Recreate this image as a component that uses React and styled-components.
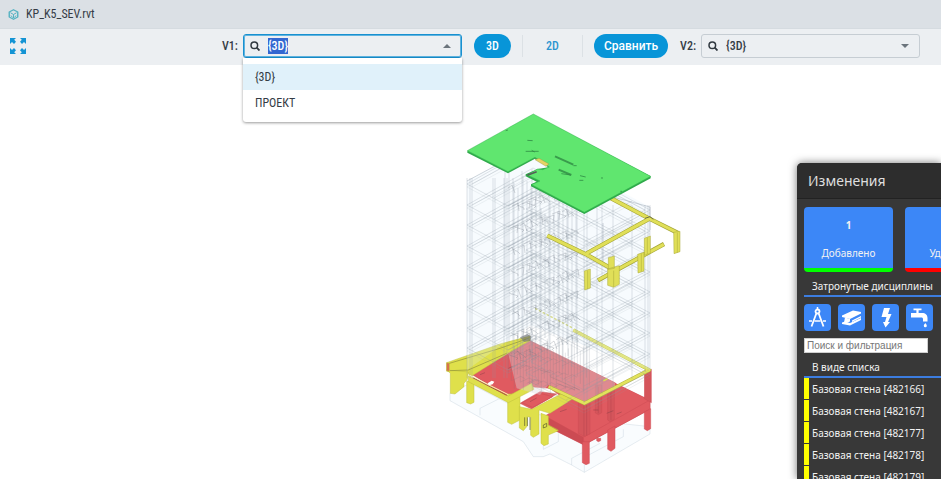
import React, { useEffect, useRef, useState } from 'react';
import styled, { createGlobalStyle, css } from 'styled-components';

const GlobalStyle = createGlobalStyle`
	* {
		box-sizing: border-box;
	}
	body {
		margin: 0;
		background: #fff;
		color: #343c45;
		font-family: "Roboto Condensed", Roboto, sans-serif;
		font-size: 12px;
		line-height: 16px;
	}
	button, input {
		font: inherit;
		color: inherit;
	}
	ul, h2, h3 {
		margin: 0;
		padding: 0;
		font: inherit;
		list-style: none;
	}
`;

const Page = styled.div`
	display: flex;
	flex-direction: column;
	height: 100vh;
	overflow: hidden;
`;

const TitleBar = styled.header`
	display: flex;
	align-items: center;
	gap: 7px;
	height: 29px;
	padding: 0 8px;
	background: #dbe0e5;
	border-bottom: 1px solid #d5dbe0;
`;

const Toolbar = styled.div`
	display: flex;
	align-items: center;
	height: 36px;
	padding: 0 21px 2px 10px;
	background: #eceff2;
`;

const IconButton = styled.button`
	display: flex;
	padding: 0;
	border: none;
	background: none;
	cursor: pointer;
`;

const Controls = styled.div`
	display: flex;
	align-items: center;
	gap: 12px;
	margin-left: auto;
`;

const Field = styled.div`
	display: flex;
	align-items: center;
	gap: 5px;
`;

const Label = styled.label`
	font-weight: 500;
`;

const Combo = styled.div`
	position: relative;
	display: flex;
	align-items: center;
	width: 219px;
	height: 24px;
	padding: 0 10px 0 6px;
	border: 1px solid #c6cdd3;
	border-radius: 3px;
	${ ({ $open }) => $open && css`
		border-color: #1890d0;
		box-shadow: inset 0 0 0 1px #5fb4e0;
	` }
`;

const ComboInput = styled.input`
	flex: 1;
	min-width: 0;
	margin-left: 8px;
	padding: 0;
	border: none;
	background: none;
	font-weight: 500;
	&:focus {
		outline: none;
	}
	&::selection {
		background: #3367d1;
		color: #fff;
	}
`;

const Caret = styled.span`
	border: 4px solid transparent;
	border-top-color: #6b747c;
	border-bottom: none;
	${ ({ $up }) => $up && css`
		border-top: none;
		border-bottom: 4px solid #6b747c;
	` }
`;

const Options = styled.ul`
	position: absolute;
	z-index: 2;
	top: 23px;
	left: -1px;
	right: -1px;
	padding: 6px 0;
	background: #fff;
	border-radius: 0 0 3px 3px;
	box-shadow: 0 1px 3px rgba(0, 0, 0, .4);
`;

const Option = styled.li`
	padding: 5px 12px;
	cursor: pointer;
	background: ${ ({ 'aria-selected': selected }) => (selected ? '#e0f1fa' : 'transparent') };
`;

const Modes = styled.div`
	display: flex;
	align-items: center;
	gap: 11px;
`;

const Divider = styled.span`
	width: 1px;
	height: 22px;
	background: #dce1e5;
`;

const Pill = styled.button`
	height: 24px;
	min-width: 37px;
	padding: 0 10px;
	border: none;
	border-radius: 12px;
	cursor: pointer;
	font-weight: 500;
	color: ${ ({ $active }) => ($active ? '#fff' : '#2b95d0') };
	background: ${ ({ $active }) => ($active ? '#0895d8' : 'none') };
`;

const Compare = styled(Pill)`
	font-family: Roboto, sans-serif;
	font-weight: 500;
`;

const Viewer = styled.main`
	position: relative;
	flex: 1;
	min-height: 0;
`;

const Scene = styled.svg`
	display: block;
	width: 100%;
	height: 100%;
`;

const Panel = styled.aside`
	position: absolute;
	top: 98px;
	right: 0;
	bottom: 0;
	width: 144px;
	overflow: hidden;
	white-space: nowrap;
	font-family: "Noto Sans", sans-serif;
	font-size: 10px;
	color: #f2f2f2;
	background: #383838;
	border-radius: 5px 0 0 0;
	box-shadow: 0 0 9px rgba(0, 0, 0, .55);
`;

const PanelTitle = styled.h2`
	height: 36px;
	padding: 0 11px;
	font-size: 14px;
	line-height: 35px;
	color: #dedede;
	background: #2d2d2d;
	border-bottom: 1px solid #222;
`;

const PanelBody = styled.div`
	padding: 8px 0 0 7px;
`;

const Cards = styled.div`
	display: flex;
	gap: 12px;
`;

const Card = styled.button`
	display: flex;
	flex-direction: column;
	align-items: center;
	flex: 0 0 89px;
	height: 65px;
	padding: 10px 0 7px;
	border: none;
	border-bottom: 4px solid ${ ({ $mark }) => $mark };
	border-radius: 4px;
	background: #3c87f7;
	color: #f2f2f2;
	cursor: pointer;
`;

const CardName = styled.span`
	margin-top: auto;
`;

const Section = styled.h3`
	margin-top: 6px;
	padding: 0 8px 1px;
	border-bottom: 2px solid #3c7de0;
`;

const Disciplines = styled.div`
	display: flex;
	gap: 7px;
	margin-top: 7px;
`;

const Discipline = styled.button`
	display: flex;
	flex: 0 0 27px;
	align-items: center;
	justify-content: center;
	height: 27px;
	padding: 0;
	border: none;
	border-radius: 4px;
	background: #3c87f7;
	cursor: pointer;
`;

const Filter = styled.input`
	display: block;
	width: 124px;
	height: 15px;
	margin-top: 7px;
	padding: 0 2px;
	border: 1px solid #cfcfcf;
	border-radius: 0;
	background: #fff;
	font-family: "Liberation Sans", sans-serif;
	color: #333;
	&::placeholder {
		color: #777;
		opacity: 1;
	}
`;

const Row = styled.li`
	display: flex;
	gap: 3px;
	height: 22px;
	line-height: 22px;
	&::before {
		content: "";
		width: 5px;
		height: 21px;
		background: #ff0;
	}
`;

const CubeIcon = () => (
	<svg width="11" height="11" viewBox="0 0 22 22" fill="none" stroke="#55b2c2" strokeWidth="2.8">
		<path d="M11 1.5 19.5 6v10L11 20.5 2.5 16V6z" strokeLinejoin="round" />
		<path d="M5 7.5l6 3.5 6-3.5M11 11v7M6 13l3 4M16 13l-3 4" strokeWidth="2" />
	</svg>
);

const ExpandIcon = () => (
	<svg width="16" height="16" viewBox="0 0 16 16" fill="#1494d4">
		<path d="M0 0h6L4.200 1.800 6 3.800 4 6 2 4 0 6z" />
		<path d="M16 0h-6l1.800 1.800L10 3.800 12 6l2-2 2 2z" />
		<path d="M0 16h6l-1.800-1.800L6 12.200 4 10l-2 2-2-2z" />
		<path d="M16 16h-6l1.800-1.800L10 12.200 12 10l2 2 2-2z" />
	</svg>
);

const SearchIcon = () => (
	<svg width="10" height="10" viewBox="0 0 10 10" fill="none" stroke="#30383f" strokeWidth="1.5">
		<circle cx="4.300" cy="4.300" r="3.300" />
		<path d="M6.700 6.700 9.500 9.500" strokeWidth="1.800" />
	</svg>
);

const CompassIcon = () => (
	<svg width="19" height="21" viewBox="0 0 19 21" fill="none" stroke="#fff" strokeWidth="1.8">
		<circle cx="9.500" cy="4.500" r="2" />
		<path d="M9.500 0v3" strokeWidth="1.500" />
		<path d="M8.500 6 3.500 19.500M10.500 6l5 13.500" />
		<path d="M1 14h3M6.500 14h6M15 14h3" strokeWidth="1.300" />
	</svg>
);

const BeamIcon = () => (
	<svg width="21" height="18" viewBox="0 0 21 18" fill="#fff">
		<path d="M1 6.500 12 1.500l8 1.500v1.500L9 10 1 8z" />
		<path d="M4 8.500 9 10v2.500L5.500 14 3 13.500z" />
		<path d="M11 11.500 20 7v1.500L11 13z" />
		<path d="M1 13.500 4 12.500l5 1.500 11-5v2L9 16.500l-8-1.500z" />
	</svg>
);

const BoltIcon = () => (
	<svg width="14" height="21" viewBox="0 0 14 21" fill="#fff">
		<path d="M5 1h6L9 7h3.500L9 15h2l-4.500 5.500L4 15h2l1.500-5H2.500z" />
	</svg>
);

const TapIcon = () => (
	<svg width="20" height="21" viewBox="0 0 20 21" fill="#fff">
		<path d="M3.500 1.500h8v1.800H8.600V6H12c3.500 0 5.500 2 5.500 5v3.500h-4.500V12c0-1-.6-1.600-1.600-1.600H1V6h5.400V3.300H3.500z" />
		<path d="M15.300 16c1 1.400 1.500 2 1.500 2.800a1.500 1.500 0 0 1-3 0c0-.8.500-1.400 1.500-2.800z" />
	</svg>
);

const range = (n, from = 0) => Array.from({ length: n }, (_, i) => i + from);

const line = (...points) => 'M' + points.map(([x, y]) => `${ x } ${ y }`).join('L');

// one storey of the tower, y is the height of its left corner
const storey = y => [
	line([467, y], [533, y - 37], [650, y + 26], [584, y + 62], [531, y + 34], [537, y + 30], [526, y + 25], [548, y + 14], [535, y + 7], [508, y + 22], [467, y]),
	line([472, y], [533, y - 33], [645, y + 26], [584, y + 58]),
	line([494, y + 14], [560, y - 22]),
	line([508, y + 22], [575, y - 14]),
	line([566, y + 52], [632, y + 17]),
].join('');

const STOREYS = range(9).map(i => 184 + Math.round(i * 20.500));

const OUTER_COLUMNS = [467, 470, 472, 493, 495, 504, 507, 584, 587, 597, 602, 613, 632, 645, 648, 650];

const columnFoot = x => (x < 580 ? 378 : 403 - Math.round((x - 584) / 2));

// the stair and lift shafts in the middle are much denser
const CORE_COLUMNS = range(25).map(i => 505 + i * 3 + (i * 7) % 3);

const CORE_MARKS = range(110).map(i => {
	const x = 508 + (i * 17) % 66;
	const y = 188 + (i * 37) % 170;
	return line([x, y], [x + 4 + i % 6, y + (i % 2 ? 3 : -3)], [x + 7, y + 5]);
}).join('');

const Wireframe = () => (
	<g fill="none" stroke="#8d98a5">
		<path d="M467 181 533 144 650 207V370L530 325 467 370z" fill="#dfeefa" fillOpacity=".25" stroke="none" />
		<path d={ STOREYS.map(storey).join('') } strokeOpacity=".25" />
		<path d={ STOREYS.map(y => storey(y + 3)).join('') } strokeOpacity=".13" />
		<path d={ OUTER_COLUMNS.map(x => line([x, x < 560 ? 178 : 205], [x, columnFoot(x)])).join('') } strokeOpacity=".28" />
		<path d={ CORE_COLUMNS.map((x, i) => line([x, 168 + (i * 5) % 22 + (x > 540 ? 24 : 0)], [x, 335 + (i * 11) % 35])).join('') } strokeOpacity=".3" />
		<path d={ CORE_MARKS } stroke="#66707c" strokeOpacity=".25" />
		<path d="M467 181 495 166M613 197 650 207V230M603 223V262" strokeOpacity=".4" />
	</g>
);

const Foundation = () => (
	<g fill="#f3f9fd" fillOpacity=".5" stroke="#a8bccb" strokeOpacity=".4" strokeWidth="2" strokeLinejoin="round">
		<path d="M30 190 90 160 260 250 630 290V312L433 427 395 405 330 372 310 380H280L250 335 30 212z" />
		<path d="M120 235V256M120 235 180 205M395 385V405M395 385 480 340M550 298V320L433 382M310 345V358L355 335V310M433 400V427" fill="none" />
	</g>
);

const YELLOW = '#dfe04b';
const YELLOW_DARK = '#bfc03c';
const RED = '#e05a60';
const RED_DARK = '#cc4b53';

const Base = () => (
	<g strokeWidth="1.500" strokeLinejoin="round">
		<Foundation />

		<g fill={ RED } stroke={ RED_DARK }>
			<path d="M97 134 270 32 630 210V238L433 344 315 285V258L385 215 330 175 270 170 205 200z" />
			<path d="M240 220 300 185 350 192 275 237z" />
			<path d="M315 258 430 322V344L322 290z" fill={ RED_DARK } />
			<path d="M430 322 630 210V238L433 344z" />
			<path d="M427 335H448V400L438 404 427 398zM503 300 525 288V355L513 364 503 358zM613 246 632 236V296L622 302 613 297zM470 325H482V332L475 335 470 332z" />
			<path d="M415 215H450V312L432 320 415 310zM503 180 523 172V268L510 275 503 270zM613 128 634 118V218L613 206zM466 165H485V248L475 254 466 249z" fill="#d5555b" />
			<path d="M432 225V318M440 225V316M475 170V250M513 178V270" fill="none" stroke="#a93c48" strokeOpacity=".7" />
		</g>

		<g fill={ YELLOW } stroke={ YELLOW_DARK }>
			<path d="M20 98 180 42 270 18V32L200 72 92 140 84 128 20 124z" />
			<path d="M20 120 85 126 82 148 72 160V170L45 192 31 190V130z" />
			<path d="M20 98V122L28 124V100z" fill="#d96a50" />
			<path d="M28 100 180 55 268 24M30 122 85 120 200 70" fill="none" stroke="#8f9038" strokeWidth="2" />
			<path d="M80 152 102 162V217L92 222 80 218zM203 192H225L240 200V270L215 283 203 277z" />
			<path d="M85 138 205 198 275 160 282 178 205 218 85 155z" />
			<path d="M90 136 205 194" fill="none" stroke="#fff8b0" strokeWidth="3" />
			<path d="M98 143 200 196" fill="none" stroke="#a55a3a" strokeWidth="3" />
			<path d="M238 230 275 238 370 188 400 205 330 250 297 240V312L280 322 272 316V262L262 260V288L250 302 238 294z" />
			<path d="M303 250 325 258V285L355 302 325 315V342L312 347 303 340z" />
			<path d="M325 285 355 300" fill="none" />
			<path d="M254 262V288M262 262V288M270 262V300M310 285V294L320 290V280z" fill="none" stroke="#55582b" strokeWidth="2" />
		</g>
		<path d="M246 218 300 190 338 200 278 232z" fill={ RED } stroke={ RED_DARK } />

		<g stroke="#7b3941" strokeOpacity=".6" fill="none" strokeWidth="2">
			<path d="M120 134 135 128M205 115 220 108M270 215 290 204M330 140 420 180M350 160 405 180M360 245 380 238M500 250 520 242M240 90 260 96M300 120 330 128M460 240H475M530 252 545 246" />
		</g>
		<path d="M143 160 155 152 163 155 158 163 147 166z" fill="#fff" />
		<path d="M205 72 270 32 525 158V170L433 218 325 165 300 195 230 175z" fill="#ddd9df" fillOpacity=".38" />
		{/* open air between the slab and the beam behind it */}
		<path d="M525 158 622 122 612 130V200z" fill="#fff" />

		<path d="M400 0 628 120 433 220 326 170" fill="none" stroke="#b5b63f" strokeWidth="11" />
		<path d="M400 0 628 120 433 220 326 170" fill="none" stroke="#e3e35c" strokeWidth="8" />
		<path d="M285-65 400-5" fill="none" stroke="#d7d766" strokeWidth="4" strokeDasharray="8 5" />
		<path d="M490 152 502 146" fill="none" stroke={ YELLOW } strokeWidth="5" />
		<g fill="none" stroke="#6d747d" strokeOpacity=".35">
			<path d={ range(28).map(i => line([205 + i * 9, 75 - (i * 13) % 60], [205 + i * 9, 130 + (i * 23) % 65])).join('') } />
			<path d={ range(26).map(i => {
				const x = 205 + (i * 31) % 180;
				const y = 75 + (i * 43) % 110;
				return line([x, y], [x + 25, y - 12], [x + 38, y - 5]);
			}).join('') } />
		</g>
		<path d="M240 22 262 12 274 18 272 32 252 36z" fill="#63656a" fillOpacity=".6" />
	</g>
);

const Beams = () => (
	<g fill="none" strokeLinejoin="round">
		<g stroke="#a5a637" strokeWidth="13">
			<path d="M508-8 628 56 714 99M630 55 440 160M322 107 440 164 525 212M474 241 672 132" />
		</g>
		<g stroke="#e0df58" strokeWidth="9">
			<path d="M508-8 628 56 714 99M630 55 440 160M322 107 440 164 525 212M475 240 671 133" />
		</g>
		<g fill="#e0df58" stroke="#a5a637" strokeWidth="1.500">
			<path d="M701 97 720 94V155L702 161zM433 213 451 207V264L434 270zM505 173 523 168V205L505 208zM503 207 538 197V253L521 262 503 256zM613 115 631 108V160L613 166zM593 163 612 157V213L594 219z" />
			<path d="M521 212V261M712 98V158M443 212V267M604 161V215M622 113V162" />
		</g>
		<path d="M615 55 630 50 640 58" stroke="#6c6d40" strokeWidth="3" />
	</g>
);

const Roof = () => (
	<g strokeLinejoin="round">
		<path d="M82 139 280 29 632 214V220L433 327 273 244V238L290 230 257 214V208L293 192 325 187 285 161 204 205 82 143z" fill="#2fa94a" />
		<path d="M82 137 280 27 632 214 433 322 275 239 300 228 262 210 293 192 308 194 328 186 285 157 204 200z" fill="#60e66f" stroke="#36b650" strokeWidth="1.500" />
		<path d="M285 164 297 160 327 177 318 184z" fill="#e6d365" stroke="#8d8440" />
		<path d="M262 211 290 200" stroke="#555f58" strokeWidth="5" />
		<g fill="none" stroke="#2f8a44" strokeOpacity=".8">
			<path d="M345 154 400 179M356 194 394 210" strokeWidth="6" />
			<path d="M364 206 392 210M197 77 204 75M262 106 278 107M257 139 296 139M275 136 284 141M400 182 410 182M420 212 437 216M418 226 430 226M483 219 489 219M541 259 546 259" strokeWidth="3" />
		</g>
	</g>
);

const Model = () => (
	<Scene viewBox="0 65 941 414" role="img" aria-label="3D">
		<g transform="translate(440 330) scale(.33333)"><Base /></g>
		<Wireframe />
		<g transform="translate(440 200) scale(.33333)"><Beams /></g>
		<g transform="translate(440 105) scale(.33333)"><Roof /></g>
	</Scene>
);

const VIEWS = ['{3D}', 'ПРОЕКТ'];

const ViewSelect = ({ id, label, defaultOpen = false }) => {
	const input = useRef(null);
	const [value, setValue] = useState(VIEWS[0]);
	const [open, setOpen] = useState(defaultOpen);

	useEffect(() => {
		if (!defaultOpen) return;
		input.current.focus();
		input.current.select();
	}, [defaultOpen]);

	const choose = view => {
		setValue(view);
		setOpen(false);
	};

	return (
		<Field>
			<Label htmlFor={ id }>{ label }</Label>
			<Combo $open={ open }>
				<SearchIcon />
				<ComboInput
					ref={ input }
					id={ id }
					role="combobox"
					aria-expanded={ open }
					aria-controls={ `${ id }-list` }
					value={ value }
					onChange={ e => setValue(e.target.value) }
					onClick={ () => setOpen(!open) }
				/>
				<Caret $up={ open } />
				{
					open && (
						<Options id={ `${ id }-list` } role="listbox">
							{
								VIEWS.map(view => (
									<Option key={ view } role="option" aria-selected={ view === value } onClick={ () => choose(view) }>
										{ view }
									</Option>
								))
							}
						</Options>
					)
				}
			</Combo>
		</Field>
	);
};

const DISCIPLINES = [
	{ name: 'Архитектура', Icon: CompassIcon },
	{ name: 'Конструкции', Icon: BeamIcon },
	{ name: 'Электрика', Icon: BoltIcon },
	{ name: 'Сантехника', Icon: TapIcon },
];

const WALLS = [482166, 482167, 482177, 482178, 482179];

const Changes = () => (
	<Panel>
		<PanelTitle>Изменения</PanelTitle>
		<PanelBody>
			<Cards>
				<Card $mark="#0f0"><b>1</b><CardName>Добавлено</CardName></Card>
				<Card $mark="#f00"><CardName>Удалено</CardName></Card>
			</Cards>
			<Section>Затронутые дисциплины</Section>
			<Disciplines>
				{
					DISCIPLINES.map(({ name, Icon }) => (
						<Discipline key={ name } aria-label={ name }><Icon /></Discipline>
					))
				}
			</Disciplines>
			<Filter placeholder="Поиск и фильтрация" aria-label="Поиск и фильтрация" />
			<Section>В виде списка</Section>
			<ul>
				{ WALLS.map(id => <Row key={ id }>Базовая стена [{ id }]</Row>) }
			</ul>
		</PanelBody>
	</Panel>
);

export default () => {
	const [mode, setMode] = useState('3D');

	return (
		<Page>
			<GlobalStyle />
			<TitleBar>
				<CubeIcon />
				<span>KP_K5_SEV.rvt</span>
			</TitleBar>
			<Toolbar>
				<IconButton aria-label="Развернуть"><ExpandIcon /></IconButton>
				<Controls>
					<ViewSelect id="v1" label="V1:" defaultOpen />
					<Modes>
						<Pill $active={ mode === '3D' } onClick={ () => setMode('3D') }>3D</Pill>
						<Divider />
						<Pill $active={ mode === '2D' } onClick={ () => setMode('2D') }>2D</Pill>
						<Divider />
						<Compare $active>Сравнить</Compare>
					</Modes>
					<ViewSelect id="v2" label="V2:" />
				</Controls>
			</Toolbar>
			<Viewer>
				<Model />
				<Changes />
			</Viewer>
		</Page>
	);
};
